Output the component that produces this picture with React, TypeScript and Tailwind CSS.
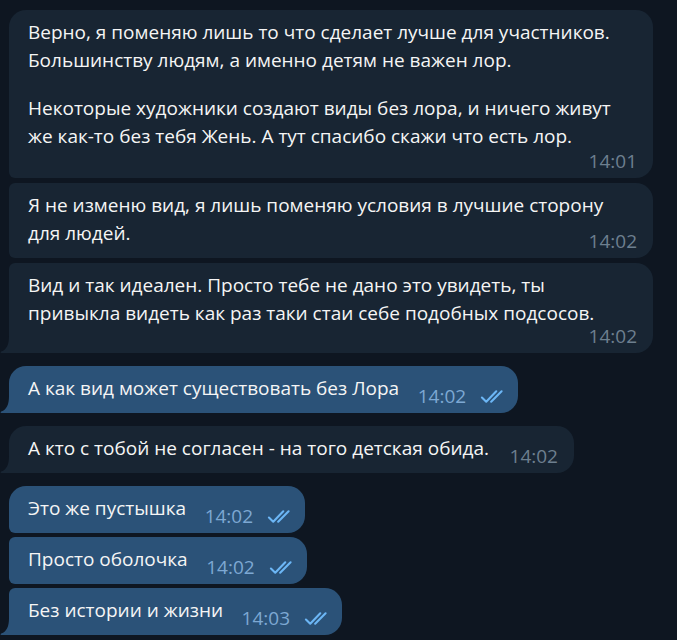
import React from 'react';

type Msg = {
  paras: string[][];
  time: string;
  out: boolean;
  first: boolean;
  last: boolean;
  ownRow?: boolean;
  wide?: boolean;
};

// each paragraph is split into the visual lines seen in the chat
const messages: Msg[] = [
  {
    paras: [
      ['Верно, я поменяю лишь то что сделает лучше для участников.', 'Большинству людям, а именно детям не важен лор.'],
      ['Некоторые художники создают виды без лора, и ничего живут', 'же как-то без тебя Жень. А тут спасибо скажи что есть лор.'],
    ],
    time: '14:01',
    out: false,
    first: true,
    last: false,
    ownRow: true,
    wide: true,
  },
  {
    paras: [['Я не изменю вид, я лишь поменяю условия в лучшие сторону', 'для людей.']],
    time: '14:02',
    out: false,
    first: false,
    last: false,
    wide: true,
  },
  {
    paras: [['Вид и так идеален. Просто тебе не дано это увидеть, ты', 'привыкла видеть как раз таки стаи себе подобных подсосов.']],
    time: '14:02',
    out: false,
    first: false,
    last: true,
    ownRow: true,
    wide: true,
  },
  { paras: [['А как вид может существовать без Лора']], time: '14:02', out: true, first: true, last: true },
  { paras: [['А кто с тобой не согласен - на того детская обида.']], time: '14:02', out: false, first: true, last: true },
  { paras: [['Это же пустышка']], time: '14:02', out: true, first: true, last: false },
  { paras: [['Просто оболочка']], time: '14:02', out: true, first: false, last: false },
  { paras: [['Без истории и жизни']], time: '14:03', out: true, first: false, last: true },
];

const Checks = () => (
  <svg width="26" height="13" viewBox="0 0 20 10" fill="none" stroke="#6cb6f5" strokeWidth="1.6" strokeLinecap="round" strokeLinejoin="round">
    <path d="M1.5 5.8 L4.8 9 L12.5 1" />
    <path d="M8.6 9 L16.6 1" />
  </svg>
);

const Tail = ({ color }: { color: string }) => (
  <svg className="absolute bottom-0 left-[-9px]" width="10" height="17" viewBox="0 0 10 17">
    <path d="M10 0 L9 0 C9 8 7 13.5 1.2 15.6 C0.2 16 0.4 17 1.4 17 L10 17 Z" fill={color} />
  </svg>
);

function Bubble({ m, index }: { m: Msg; index: number }) {
  const bg = m.out ? 'bg-[#2b5278]' : 'bg-[#182533]';
  const topLeft = m.first ? 'rounded-tl-[17px]' : 'rounded-tl-[6px]';
  const bottomLeft = m.last ? 'rounded-bl-none' : 'rounded-bl-[6px]';
  const spacing = index === 0 ? '' : m.first ? 'mt-[13px]' : m.out ? 'mt-[4px]' : 'mt-[5px]';

  return (
    <div
      className={`relative ${m.wide ? 'w-[644px]' : 'w-fit'} ${bg} ${topLeft} ${bottomLeft} rounded-r-[17px] pl-[19px] ${m.out ? 'pr-[12px]' : 'pr-[16px]'} pt-[8px] pb-[11px] text-[19px] leading-[28px] text-[#f5f5f5] whitespace-nowrap ${spacing}`}
    >
      {m.paras.map((p, i) => (
        <div key={i} className={i > 0 ? 'mt-[20px]' : ''}>
          {p.map((line, j) => (
            <div key={j}>
              {line}
              {!m.ownRow && i === m.paras.length - 1 && j === p.length - 1 && (
                <span className={`inline-block h-[1px] ${m.out ? 'w-[107px]' : 'w-[69px]'}`} />
              )}
            </div>
          ))}
        </div>
      ))}
      {m.ownRow && <div className={m.first ? 'h-[17px]' : 'h-[15px]'} />}
      <div
        className={`absolute bottom-[7px] ${m.out ? 'right-[12px]' : 'right-[16px]'} flex items-center gap-[14px] text-[19px] leading-[20px] ${m.out ? 'text-[#7da8d3]' : 'text-[#6d7f8f]'}`}
      >
        <span>{m.time}</span>
        {m.out && <Checks />}
      </div>
      {m.last && <Tail color={m.out ? '#2b5278' : '#182533'} />}
    </div>
  );
}

export default function App() {
  return (
    <div className="min-h-screen w-full bg-[#0e1621] pl-[9px] pt-[10px] pb-[4px] font-['Open_Sans',sans-serif] overflow-hidden">
      {messages.map((m, i) => (
        <Bubble key={i} m={m} index={i} />
      ))}
    </div>
  );
}
